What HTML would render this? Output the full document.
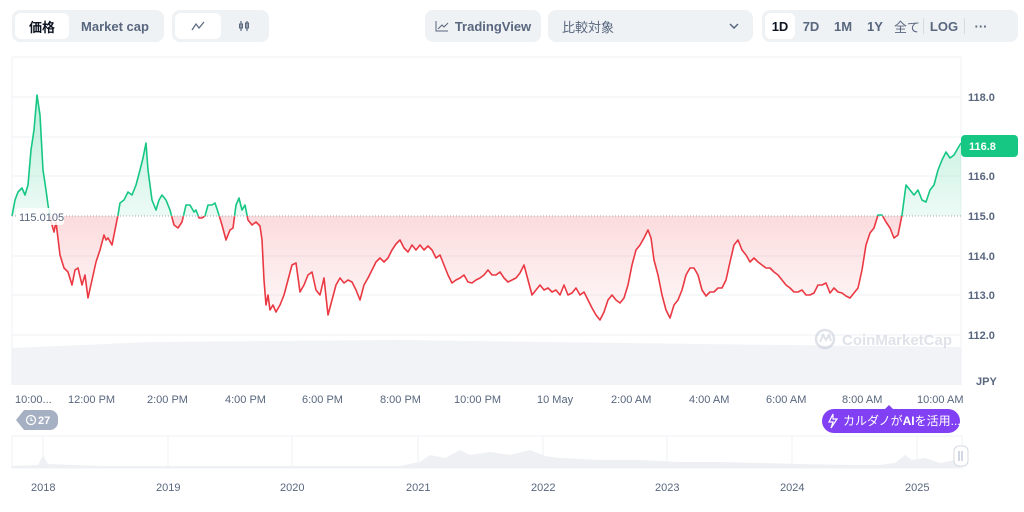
<!DOCTYPE html>
<html><head><meta charset="utf-8"><style>
*{box-sizing:border-box;margin:0;padding:0}
body{width:1024px;height:512px;background:#fff;font-family:"Liberation Sans","Noto Sans CJK JP",sans-serif;position:relative;overflow:hidden;color:#58667e}
.grp{position:absolute;top:10px;height:32px;background:#eff2f5;border-radius:8px;display:flex;align-items:center;padding:3px}
.it{height:26px;display:flex;align-items:center;justify-content:center;font-size:13px;font-weight:bold;color:#58667e;border-radius:6px}
.on{background:#fff;color:#0d1421}
</style></head><body>
<div class="grp" style="left:12px;width:152px"><div class="it on" style="width:54px">価格</div><div class="it" style="width:92px">Market cap</div></div>
<div class="grp" style="left:172px;width:97px"><div class="it on" style="width:46px"><svg width="14" height="10"><path d="M1 9L5 3L8 7L13 1" stroke="#58667e" fill="none" stroke-width="1.2"/></svg></div><div class="it" style="width:45px"><svg width="12" height="12"><path d="M3 1V11M9 1V11" stroke="#58667e" stroke-width="1.2"/><rect x="1.5" y="4" width="3" height="4" fill="none" stroke="#58667e"/><rect x="7.5" y="3" width="3" height="5" fill="none" stroke="#58667e"/></svg></div></div>
<div class="grp" style="left:425px;width:116px;justify-content:center"><div class="it" style="gap:6px"><svg width="14" height="12"><path d="M1 1V11H13M3 9L7 5L9 7L13 3" stroke="#58667e" fill="none" stroke-width="1"/></svg>TradingView</div></div>
<div class="grp" style="left:548px;width:205px;padding:0 14px;justify-content:space-between"><span style="font-size:13px;color:#58667e">比較対象</span><svg width="10" height="6"><path d="M1 1L5 5L9 1" stroke="#58667e" fill="none" stroke-width="1.5"/></svg></div>
<div class="grp" style="left:762px;width:256px"><div class="it on" style="width:30px">1D</div><div class="it" style="width:32px">7D</div><div class="it" style="width:32px">1M</div><div class="it" style="width:32px">1Y</div><div class="it" style="width:32px;font-weight:normal">全て</div><div style="width:1px;height:16px;background:#d5d9e0"></div><div class="it" style="width:40px">LOG</div><div style="width:1px;height:16px;background:#d5d9e0"></div><div class="it" style="width:32px">···</div></div>

<svg style="position:absolute;left:0;top:0" width="1024" height="512">
<defs>
<linearGradient id="gg" x1="0" y1="90" x2="0" y2="216" gradientUnits="userSpaceOnUse"><stop offset="0" stop-color="#16c784" stop-opacity=".3"/><stop offset="1" stop-color="#16c784" stop-opacity=".08"/></linearGradient>
<linearGradient id="rg" x1="0" y1="216" x2="0" y2="320" gradientUnits="userSpaceOnUse"><stop offset="0" stop-color="#ea3943" stop-opacity=".18"/><stop offset="1" stop-color="#ea3943" stop-opacity=".03"/></linearGradient>
<clipPath id="up"><rect x="0" y="0" width="1024" height="216"/></clipPath>
<clipPath id="dn"><rect x="0" y="216" width="1024" height="300"/></clipPath>
<polygon id="pf" points="12,216 15,200 18,192 22,188 25,195 28,185 31,150 34,130 37,95 40,115 43,170 46,190 48,205 50,216 52,225 54,232 56,222 60,255 64,268 68,272 72,285 75,270 78,268 82,285 85,275 88,298 92,280 96,262 100,250 104,235 106,240 108,238 112,245 116,225 118,215 120,203 124,200 128,192 132,195 136,185 140,170 143,158 146,143 148,170 152,200 156,210 159,200 162,195 166,200 170,210 174,225 178,228 182,222 186,205 190,205 194,212 196,210 199,218 202,218 205,216 208,205 212,205 215,203 218,212 222,225 226,240 230,230 233,228 236,205 239,198 242,210 245,205 248,220 252,225 256,222 260,226 262,240 264,280 266,305 268,295 270,310 273,305 276,312 280,305 284,295 288,280 292,265 296,263 300,292 304,285 308,275 312,272 316,290 320,295 324,278 328,315 332,300 336,285 340,278 344,283 348,280 352,282 356,290 360,300 364,285 368,278 372,270 376,262 380,258 384,262 388,258 392,250 396,244 400,240 404,248 408,252 412,245 416,250 420,245 424,250 428,246 432,250 436,258 440,255 444,265 448,275 452,283 456,280 460,278 464,275 468,282 472,283 476,280 480,278 484,275 488,270 492,275 496,275 500,272 504,278 508,282 512,280 516,278 520,273 524,265 528,280 532,295 536,290 540,285 544,290 548,288 552,292 556,290 560,295 564,285 568,295 572,293 576,288 580,295 584,292 588,300 592,308 596,315 600,320 604,312 608,300 612,295 616,300 620,303 624,298 628,285 632,265 636,250 640,245 644,238 648,230 651,238 654,260 658,275 662,295 666,310 670,318 674,305 678,300 682,290 686,275 690,268 694,268 698,275 702,290 706,296 710,292 714,292 718,288 722,288 726,280 730,262 734,245 738,240 742,250 746,255 750,262 754,258 758,262 762,265 766,268 770,268 774,272 778,275 782,280 786,285 790,288 794,292 798,292 802,290 806,295 810,295 814,293 818,285 822,285 826,283 830,293 834,288 838,292 842,293 846,296 850,298 854,293 858,288 862,270 866,245 870,233 874,228 878,215 882,215 886,222 890,228 894,238 898,235 902,215 906,185 910,190 914,195 918,190 922,200 926,202 930,190 934,185 938,170 942,160 946,152 950,158 954,155 958,148 961,143 961,216"/>
<polyline id="pl" fill="none" points="12,216 15,200 18,192 22,188 25,195 28,185 31,150 34,130 37,95 40,115 43,170 46,190 48,205 50,216 52,225 54,232 56,222 60,255 64,268 68,272 72,285 75,270 78,268 82,285 85,275 88,298 92,280 96,262 100,250 104,235 106,240 108,238 112,245 116,225 118,215 120,203 124,200 128,192 132,195 136,185 140,170 143,158 146,143 148,170 152,200 156,210 159,200 162,195 166,200 170,210 174,225 178,228 182,222 186,205 190,205 194,212 196,210 199,218 202,218 205,216 208,205 212,205 215,203 218,212 222,225 226,240 230,230 233,228 236,205 239,198 242,210 245,205 248,220 252,225 256,222 260,226 262,240 264,280 266,305 268,295 270,310 273,305 276,312 280,305 284,295 288,280 292,265 296,263 300,292 304,285 308,275 312,272 316,290 320,295 324,278 328,315 332,300 336,285 340,278 344,283 348,280 352,282 356,290 360,300 364,285 368,278 372,270 376,262 380,258 384,262 388,258 392,250 396,244 400,240 404,248 408,252 412,245 416,250 420,245 424,250 428,246 432,250 436,258 440,255 444,265 448,275 452,283 456,280 460,278 464,275 468,282 472,283 476,280 480,278 484,275 488,270 492,275 496,275 500,272 504,278 508,282 512,280 516,278 520,273 524,265 528,280 532,295 536,290 540,285 544,290 548,288 552,292 556,290 560,295 564,285 568,295 572,293 576,288 580,295 584,292 588,300 592,308 596,315 600,320 604,312 608,300 612,295 616,300 620,303 624,298 628,285 632,265 636,250 640,245 644,238 648,230 651,238 654,260 658,275 662,295 666,310 670,318 674,305 678,300 682,290 686,275 690,268 694,268 698,275 702,290 706,296 710,292 714,292 718,288 722,288 726,280 730,262 734,245 738,240 742,250 746,255 750,262 754,258 758,262 762,265 766,268 770,268 774,272 778,275 782,280 786,285 790,288 794,292 798,292 802,290 806,295 810,295 814,293 818,285 822,285 826,283 830,293 834,288 838,292 842,293 846,296 850,298 854,293 858,288 862,270 866,245 870,233 874,228 878,215 882,215 886,222 890,228 894,238 898,235 902,215 906,185 910,190 914,195 918,190 922,200 926,202 930,190 934,185 938,170 942,160 946,152 950,158 954,155 958,148 961,143"/>
</defs>
<line x1="12" y1="57" x2="961" y2="57" stroke="#eff2f5"/>
<line x1="12" y1="57" x2="12" y2="385" stroke="#eff2f5"/>
<line x1="961" y1="57" x2="961" y2="385" stroke="#eff2f5"/>
<g stroke="#eff2f5"><line x1="12" y1="97" x2="961" y2="97"/><line x1="12" y1="137" x2="961" y2="137"/><line x1="12" y1="176" x2="961" y2="176"/><line x1="12" y1="256" x2="961" y2="256"/><line x1="12" y1="295" x2="961" y2="295"/><line x1="12" y1="335" x2="961" y2="335"/></g>
<path d="M12 348 L150 342 L400 340 L700 344 L961 347 L961 385 L12 385Z" fill="#eff2f5" opacity=".9"/>
<use href="#pf" fill="url(#gg)" clip-path="url(#up)"/>
<use href="#pf" fill="url(#rg)" clip-path="url(#dn)"/>
<use href="#pl" stroke="#16c784" stroke-width="1.6" stroke-linejoin="round" clip-path="url(#up)"/>
<use href="#pl" stroke="#ea3943" stroke-width="1.6" stroke-linejoin="round" clip-path="url(#dn)"/>
<line x1="12" y1="216" x2="961" y2="216" stroke="#a0a8b5" stroke-dasharray="1,2"/>
<rect x="16" y="208" width="48" height="17" rx="3" fill="#fff" opacity=".85"/>
<text x="19" y="221" font-size="11" fill="#58667e">115.0105</text>
<g font-size="11" fill="#58667e" font-weight="bold">
<text x="968" y="101">118.0</text><text x="968" y="180">116.0</text><text x="968" y="220">115.0</text><text x="968" y="260">114.0</text><text x="968" y="299">113.0</text><text x="968" y="339">112.0</text>
<text x="976" y="385">JPY</text></g>
<rect x="961" y="135" width="57" height="22" rx="4" fill="#16c784"/>
<text x="969" y="150" font-size="11" font-weight="bold" fill="#fff">116.8</text>
<g opacity=".35"><circle cx="825" cy="339" r="9" fill="none" stroke="#a6b0c3" stroke-width="2.5"/><path d="M820 342L823 335L826 340L829 335L831 341" stroke="#a6b0c3" fill="none" stroke-width="2"/><text x="842" y="345" font-size="15" font-weight="bold" fill="#a6b0c3">CoinMarketCap</text></g>
<g font-size="11" fill="#58667e">
<text x="15" y="403">10:00...</text><text x="68" y="403">12:00 PM</text><text x="147" y="403">2:00 PM</text><text x="225" y="403">4:00 PM</text><text x="302" y="403">6:00 PM</text><text x="380" y="403">8:00 PM</text><text x="454" y="403">10:00 PM</text><text x="537" y="403">10 May</text><text x="611" y="403">2:00 AM</text><text x="689" y="403">4:00 AM</text><text x="766" y="403">6:00 AM</text><text x="842" y="403">8:00 AM</text><text x="917" y="403">10:00 AM</text></g>
<path d="M16 420L24 410H50a8 8 0 0 1 8 8v4a8 8 0 0 1-8 8H24Z" fill="#a6b0c3"/>
<circle cx="31" cy="420" r="4.5" fill="none" stroke="#fff" stroke-width="1.3"/>
<path d="M31 417.5V420.5H33" stroke="#fff" fill="none" stroke-width="1.1"/>
<text x="38" y="424" font-size="11" font-weight="bold" fill="#fff">27</text>
<path d="M885 409L889 405L893 409Z" fill="#8140f3"/>
<rect x="822" y="409" width="138" height="24" rx="12" fill="#8140f3"/>
<path d="M833 414L829 422H833L831 428L837 419H833Z" fill="none" stroke="#fff" stroke-width="1.2"/>
<text x="843" y="425" font-size="12" fill="#fff">カルダノが<tspan font-weight="bold">AI</tspan>を活用...</text>
<rect x="12" y="436" width="950" height="32" fill="#fff" stroke="#eff2f5"/>
<g stroke="#eff2f5"><line x1="43" y1="436" x2="43" y2="468"/><line x1="168" y1="436" x2="168" y2="468"/><line x1="292" y1="436" x2="292" y2="468"/><line x1="418" y1="436" x2="418" y2="468"/><line x1="543" y1="436" x2="543" y2="468"/><line x1="667" y1="436" x2="667" y2="468"/><line x1="792" y1="436" x2="792" y2="468"/><line x1="917" y1="436" x2="917" y2="468"/></g>
<path d="M12 468L12 466L38 465L43 455L48 464L100 466L200 466L300 466L400 466L420 462L430 455L445 458L460 450L470 455L490 452L510 455L530 450L545 456L560 458L600 460L640 460L680 462L720 462L760 463L800 464L850 465L880 465L895 463L905 455L912 460L925 458L940 463L955 460L961 468Z" fill="#eef0f3"/>
<rect x="954" y="446" width="14" height="20" rx="5" fill="#fff" stroke="#d5d9e0"/>
<path d="M959 451V461M962 451V461" stroke="#a6b0c3"/>
<g font-size="11" fill="#58667e"><text x="31" y="491">2018</text><text x="156" y="491">2019</text><text x="280" y="491">2020</text><text x="406" y="491">2021</text><text x="531" y="491">2022</text><text x="655" y="491">2023</text><text x="780" y="491">2024</text><text x="905" y="491">2025</text></g>
</svg>
</body></html>
